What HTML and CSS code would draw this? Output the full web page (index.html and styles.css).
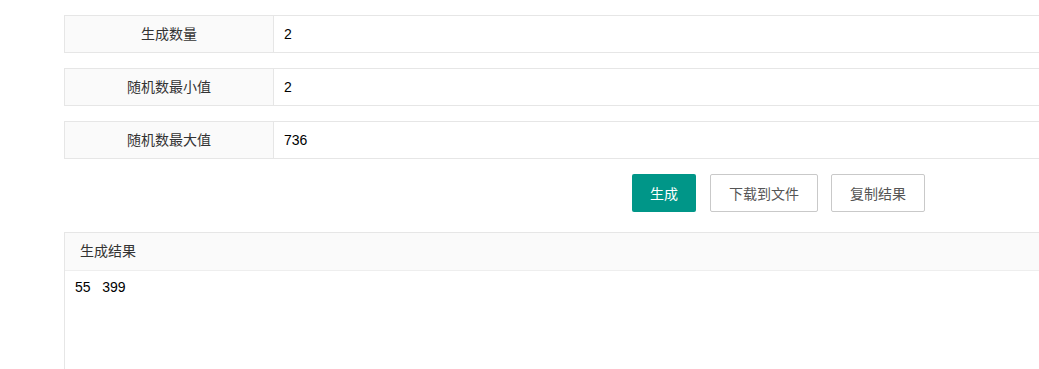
FILE: index.html
```html
<!DOCTYPE html>
<html lang="zh-CN">
<head>
  <meta charset="UTF-8" />
  <meta name="viewport" content="width=device-width, initial-scale=1" />
  <title>随机数生成</title>
  <link rel="stylesheet" href="styles.css">
</head>
<body>
  <main class="tool">
    <div class="form-item">
      <label class="form-label">生成数量</label>
      <div class="form-input">2</div>
    </div>
    <div class="form-item">
      <label class="form-label">随机数最小值</label>
      <div class="form-input">2</div>
    </div>
    <div class="form-item">
      <label class="form-label">随机数最大值</label>
      <div class="form-input">736</div>
    </div>

    <div class="actions">
      <button class="btn btn-primary">生成</button>
      <button class="btn">下载到文件</button>
      <button class="btn btn-last">复制结果</button>
    </div>

    <section class="panel">
      <div class="panel-header">生成结果</div>
      <div class="panel-body">55   399</div>
    </section>
  </main>
</body>
</html>
```

FILE: styles.css
```css
body {
  margin: 0;
  overflow: hidden;
  background-color: #fff;
  color: #333;
  font-family: "Liberation Sans", "Noto Sans CJK SC", sans-serif;
  font-size: 14px;
}

.tool {
  width: 1000px;
  padding: 15px 0 0 64px;
}

.form-item {
  display: flex;
  height: 38px;
  margin-bottom: 15px;
  border: 1px solid #e6e6e6;
  box-sizing: border-box;
}

.form-label {
  width: 208px;
  flex: none;
  display: flex;
  align-items: center;
  justify-content: center;
  padding-bottom: 3px;
  background-color: #fafafa;
  border-right: 1px solid #e6e6e6;
  color: #333;
}

.form-input {
  flex: 1;
  display: flex;
  align-items: center;
  padding-left: 10px;
  color: #000;
}

.actions {
  display: flex;
  gap: 14px;
  padding-left: 568px;
  margin-top: 1px;
  margin-bottom: 20px;
}

.btn {
  height: 38px;
  padding: 0 18px;
  border: 1px solid #c9c9c9;
  border-radius: 2px;
  background-color: #fff;
  color: #555;
  font-family: inherit;
  font-size: 14px;
  cursor: pointer;
}

.btn-primary {
  border: none;
  background-color: #009688;
  color: #fff;
}

.btn-last {
  margin-left: -1px;
}

.panel {
  border: 1px solid #e6e6e6;
  border-bottom: none;
  height: 136px;
}

.panel-header {
  height: 37px;
  line-height: 37px;
  padding-left: 15px;
  background-color: #fafafa;
  border-bottom: 1px solid #eee;
  color: #333;
}

.panel-body {
  padding: 6px 10px;
  line-height: 20px;
  white-space: pre;
  color: #000;
}
```
